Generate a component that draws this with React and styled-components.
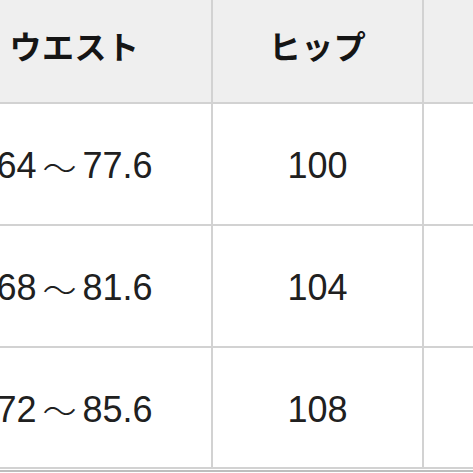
import React from "react";
import styled, { createGlobalStyle } from "styled-components";

const rows = [
  { from: "64", to: "77.6", hip: "100" },
  { from: "68", to: "81.6", hip: "104" },
  { from: "72", to: "85.6", hip: "108" },
];

const App = () => {
  return (
    <>
      <GlobalStyle />
      <Viewport>
        <SizeTable>
          <HeadCell>ウエスト</HeadCell>
          <HeadCell>ヒップ</HeadCell>
          <HeadCell />
          {rows.map((row, index) => (
            <React.Fragment key={index}>
              <Cell>
                {row.from}
                <Tilde>～</Tilde>
                {row.to}
              </Cell>
              <Cell>{row.hip}</Cell>
              <Cell />
            </React.Fragment>
          ))}
        </SizeTable>
        <BottomRule />
      </Viewport>
    </>
  );
};

const GlobalStyle = createGlobalStyle`
  html, body {
    margin: 0;
    padding: 0;
    background: #ffffff;
    overflow: hidden;
  }
  body {
    font-family: "Noto Sans CJK JP", "Noto Sans", sans-serif;
    color: #1c1c1c;
  }
`;

const Viewport = styled.div`
  width: 473px;
  height: 473px;
  overflow: hidden;
  background: #ffffff;
`;

const SizeTable = styled.div`
  display: grid;
  grid-template-columns: 273px 209px 200px;
  grid-template-rows: 114px 120px 120px 119px;
  gap: 2px;
  padding-bottom: 2px;
  margin: -12px 0 0 -62px;
  width: 686px;
  background: #d2d2d2;
`;

const HeadCell = styled.div`
  display: flex;
  align-items: center;
  justify-content: center;
  background: #efefef;
  font-size: 32px;
  font-weight: 700;
  letter-spacing: 0.5px;
  color: #151515;
`;

const Cell = styled.div`
  display: flex;
  align-items: center;
  justify-content: center;
  padding-top: 4px;
  background: #ffffff;
  font-family: "Liberation Sans", Arial, sans-serif;
  font-size: 36px;
  font-weight: 400;
  color: #202020;
`;

const Tilde = styled.span`
  font-family: "Noto Sans CJK JP", sans-serif;
  font-weight: 300;
  font-size: 34px;
  margin: 0 6px;
`;

const BottomRule = styled.div`
  margin-top: 1px;
  height: 2px;
  background: #bdbdbd;
`;

export default App;
